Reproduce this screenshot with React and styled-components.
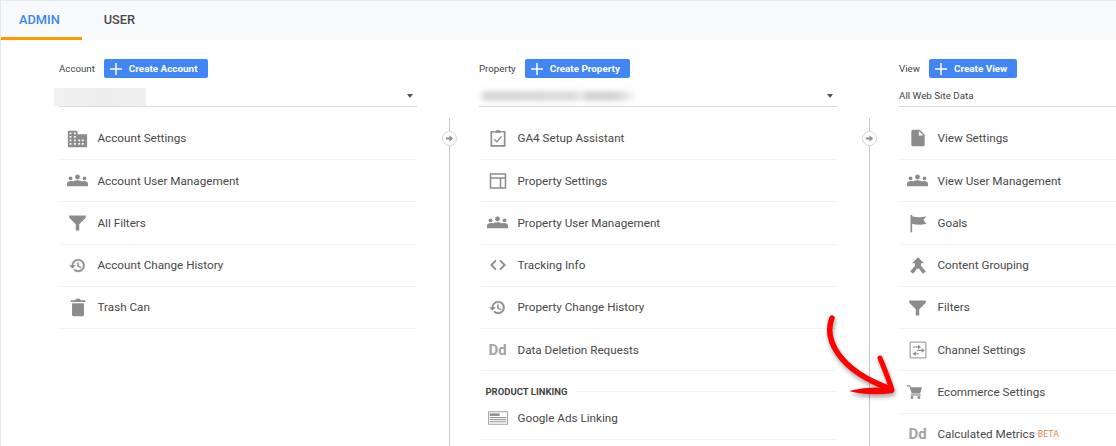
import React from "react";
import styled, { createGlobalStyle } from "styled-components";

const GlobalStyle = createGlobalStyle`
    html, body {
        margin: 0;
        padding: 0;
        background: #fff;
        font-family: Roboto, "Liberation Sans", sans-serif;
    }
`;

const filled = (d) => <path d={d} fill="currentColor" />;

const icons = {
    domain: filled("M12 7V3H1v19h22V7H12zM5 19H3v-2h2v2zm0-4H3v-2h2v2zm0-4H3V9h2v2zm0-4H3V5h2v2zm5 12H8v-2h2v2zm0-4H8v-2h2v2zm0-4H8V9h2v2zm0-4H8V5h2v2zm5 8h-2v-2h2v2zm0 4h-2v-2h2v2zm4-4h-2v-2h2v2zm0 4h-2v-2h2v2z"),
    group: (
        <g fill="currentColor">
            <circle cx="4" cy="9.500" r="2.200" />
            <circle cx="12" cy="8" r="2.800" />
            <circle cx="20" cy="9.500" r="2.200" />
            <path d="M0 18.500v-3c0-1.800 2-3 4.500-3 1 0 1.800.2 2.500.5 1.300-.8 3-1.200 5-1.200s3.700.4 5 1.200c.7-.3 1.500-.5 2.500-.5 2.500 0 4.500 1.200 4.500 3v3z" />
        </g>
    ),
    filter: filled("M2.500 4h19v2.500L14 14v7h-4v-7L2.500 6.500z"),
    history: (
        <path
            d="M13 3a9 9 0 0 0-9 9H1l3.890 3.890.07.14L9 12H6c0-3.870 3.130-7 7-7s7 3.130 7 7-3.130 7-7 7c-1.930 0-3.680-.79-4.940-2.060l-1.420 1.420A8.954 8.954 0 0 0 13 21a9 9 0 0 0 0-18zm-1 5v5l4.280 2.540.72-1.210-3.500-2.080V8H12z"
            fill="currentColor"
            stroke="currentColor"
            strokeWidth="0.800"
        />
    ),
    trash: filled("M5.500 8h13v12.500c0 .8-.7 1.500-1.500 1.500H7c-.8 0-1.500-.7-1.500-1.500zM4 4.500h5L10 3h4l1 1.500h5v2H4z"),
    setup: (
        <g fill="none" stroke="currentColor" strokeWidth="2">
            <path d="M8 4.500H4v17h16v-17h-4" />
            <path d="M9 5.500V3.500h2c0-1.500 2-1.500 2 0h2v2z" fill="currentColor" strokeWidth="1" />
            <path d="M7.500 13.500l3 3 6-6.500" strokeWidth="1.600" />
        </g>
    ),
    layout: (
        <g fill="none" stroke="currentColor" strokeWidth="1.800">
            <path d="M3 3.500h18v17H3zM3 8.500h18M15 8.500v12" />
        </g>
    ),
    code: (
        <g fill="none" stroke="currentColor" strokeWidth="2.200">
            <path d="M9.500 6.500L4 12l5.500 5.500M14.500 6.500L20 12l-5.500 5.500" />
        </g>
    ),
    ads: (
        <g fill="none" stroke="currentColor">
            <path d="M.5 4.500h23v15H.500z" strokeWidth="1" />
            <path d="M2 8h12" strokeWidth="3" />
            <path d="M2 11.500h20M2 14h20M2 16.500h20" strokeWidth="1.200" />
        </g>
    ),
    file: filled("M6 2c-1.100 0-1.990.9-1.990 2L4 20c0 1.100.89 2 1.990 2H18c1.100 0 2-.9 2-2V8l-6-6H6zm7 7V3.500L18.500 9H13z"),
    flag: filled("M3 2.500h2V23H3zM5 4c5.500 1.500 10 1.500 17 0l-3.500 4.500 3.500 4.500c-7 1.500-11.500 1.500-17 0z"),
    merge: filled("M12 1.500L20 9.500h-4v3.500l6.500 7.500-4 3-5-6.500h-3l-5 6.500-4-3L8 13V9.500H4z"),
    channel: (
        <g fill="none" stroke="currentColor">
            <path d="M1.500 1.500h21v21h-21z" strokeWidth="1.300" />
            <path d="M5 8h8M6 17h7M11 12.500h8" strokeWidth="1.600" />
            <path d="M12 5l4 3-4 3zM9 14l-4 3 4 3zM17 9.500l4 3-4 3z" fill="currentColor" stroke="none" />
        </g>
    ),
    cart: (
        <g fill="currentColor">
            <path d="M0 2h5l1 3h18l-3 10H7.500L4 4H0z" />
            <path d="M6 16.500h16v2H6z" />
            <circle cx="8" cy="21.500" r="2.300" />
            <circle cx="19" cy="21.500" r="2.300" />
        </g>
    ),
};

const iconSizes = { group: 21, domain: 21, history: 17, trash: 22, merge: 18, channel: 18, cart: 15, filter: 21 };

const columns = [
    {
        label: "Account",
        create: "Create Account",
        selected: "blank",
        rows: [
            { icon: "domain", text: "Account Settings" },
            { icon: "group", text: "Account User Management" },
            { icon: "filter", text: "All Filters" },
            { icon: "history", text: "Account Change History" },
            { icon: "trash", text: "Trash Can" },
        ],
    },
    {
        label: "Property",
        create: "Create Property",
        selected: "blurred",
        rows: [
            { icon: "setup", text: "GA4 Setup Assistant" },
            { icon: "layout", text: "Property Settings" },
            { icon: "group", text: "Property User Management" },
            { icon: "code", text: "Tracking Info" },
            { icon: "history", text: "Property Change History" },
            { icon: "dd", text: "Data Deletion Requests" },
            { section: "PRODUCT LINKING" },
            { icon: "ads", text: "Google Ads Linking" },
        ],
    },
    {
        label: "View",
        create: "Create View",
        selected: "All Web Site Data",
        noCaret: true,
        rows: [
            { icon: "file", text: "View Settings" },
            { icon: "group", text: "View User Management" },
            { icon: "flag", text: "Goals" },
            { icon: "merge", text: "Content Grouping" },
            { icon: "filter", text: "Filters" },
            { icon: "channel", text: "Channel Settings" },
            { icon: "cart", text: "Ecommerce Settings" },
            { icon: "dd", text: "Calculated Metrics", beta: true },
        ],
    },
];

const MenuIcon = ({ name }) => {
    if (name === "dd") return <DdGlyph>Dd</DdGlyph>;
    return (
        <IconSvg viewBox="0 0 24 24" $size={iconSizes[name] || 20} $cart={name === "cart"}>
            {icons[name]}
        </IconSvg>
    );
};

const renderSelected = (selected) => {
    if (selected === "blank") return <BlankBar />;
    if (selected === "blurred") return <BlurBar />;
    return <PlainValue>{selected}</PlainValue>;
};

const App = () => {
    return (
        <Page>
            <GlobalStyle />
            <TabBar>
                <Tab $active>ADMIN</Tab>
                <Tab>USER</Tab>
            </TabBar>
            <Columns>
                {columns.map((col, i) => (
                    <React.Fragment key={col.label}>
                        {i > 0 && (
                            <Rail>
                                <RailDot>
                                    <svg viewBox="0 0 10 10" width="9" height="9">
                                        <path d="M1 4h4V1.500L9 5 5 8.500V6H1z" fill="#8f8f8f" />
                                    </svg>
                                </RailDot>
                            </Rail>
                        )}
                        <Column>
                            <ColumnHead>
                                <HeadLabel>{col.label}</HeadLabel>
                                <CreateButton>
                                    <svg viewBox="0 0 12 12" width="12" height="12">
                                        <path d="M6 0v12M0 6h12" stroke="#fff" strokeWidth="1.500" />
                                    </svg>
                                    {col.create}
                                </CreateButton>
                            </ColumnHead>
                            <Selector>
                                {renderSelected(col.selected)}
                                {!col.noCaret && <Caret />}
                            </Selector>
                            <Menu>
                                {col.rows.map((row) =>
                                    row.section ? (
                                        <SectionTitle key={row.section}>{row.section}</SectionTitle>
                                    ) : (
                                        <MenuRow key={row.text}>
                                            <IconSlot><MenuIcon name={row.icon} /></IconSlot>
                                            <span>{row.text}</span>
                                            {row.beta && <Beta>BETA</Beta>}
                                        </MenuRow>
                                    )
                                )}
                            </Menu>
                        </Column>
                    </React.Fragment>
                ))}
            </Columns>
            <CurvedArrow viewBox="0 0 90 90" width="90" height="90">
                <path d="M9 6C1 26 14 58 68 77" fill="none" stroke="#f00" strokeWidth="5.500" strokeLinecap="round" />
                <path d="M26 79C40 75 55 75 70 76L70 81C55 83 40 83 26 79z" fill="#f00" />
                <path d="M57 46C61 56 66 68 69 78" fill="none" stroke="#f00" strokeWidth="5" strokeLinecap="round" />
            </CurvedArrow>
        </Page>
    );
};

const Page = styled.div`
    position: relative;
    width: 1116px;
    height: 446px;
    overflow: hidden;
    box-sizing: border-box;
    border-top: 1px solid #e6e8ea;
    border-left: 1px solid #e6e8ea;
    background: #fff;
`;

const TabBar = styled.div`
    display: flex;
    gap: 4px;
    height: 39px;
    background: #f8f9fa;
`;

const Tab = styled.div`
    display: flex;
    align-items: center;
    box-sizing: border-box;
    padding: 0 22px 0 18px;
    font-size: 12.8px;
    font-weight: 500;
    color: ${(props) => (props.$active ? "#3b85ec" : "#4a4a4a")};
    border-bottom: 3px solid ${(props) => (props.$active ? "#ff9800" : "transparent")};
`;

const Columns = styled.div`
    display: flex;
    padding: 19px 0 0 58px;
`;

const Column = styled.div`
    flex: 0 0 358px;
`;

const Rail = styled.div`
    position: relative;
    flex: 0 0 62px;
    margin-top: 59px;
    margin-bottom: -200px;
    &::before {
        content: "";
        position: absolute;
        left: 32px;
        top: 0;
        bottom: 0;
        width: 1px;
        background: #c6c6c6;
    }
`;

const RailDot = styled.div`
    position: absolute;
    left: 25px;
    top: 13px;
    display: flex;
    align-items: center;
    justify-content: center;
    box-sizing: border-box;
    width: 15px;
    height: 15px;
    border: 1px solid #d6d6d6;
    border-radius: 50%;
    background: #fff;
`;

const ColumnHead = styled.div`
    display: flex;
    align-items: center;
    gap: 9px;
    height: 19px;
`;

const HeadLabel = styled.div`
    font-size: 9.7px;
    color: #444;
`;

const CreateButton = styled.div`
    display: flex;
    align-items: center;
    gap: 7px;
    height: 19px;
    padding: 0 10px 0 6px;
    box-sizing: border-box;
    border-radius: 2px;
    background: #4285f4;
    color: #fff;
    font-size: 9.9px;
    font-weight: 700;
`;

const Selector = styled.div`
    display: flex;
    align-items: center;
    justify-content: space-between;
    height: 16px;
    margin-top: 10px;
    padding: 0 4px 2px 0;
    border-bottom: 1px solid #dadce0;
`;

const PlainValue = styled.div`
    margin-bottom: 2px;
    font-size: 9.8px;
    color: #444;
`;

const BlankBar = styled.div`
    width: 92px;
    height: 18px;
    margin: 0 0 -2px -5px;
    background: linear-gradient(90deg, #f1f1f1, #ededed 50%, #f0f0f0);
`;

const BlurBar = styled.div`
    width: 152px;
    height: 8px;
    margin-left: 3px;
    border-radius: 3px;
    background: linear-gradient(90deg, #cacaca, #d2d2d2 62%, #f4f4f4 65%, #c6c6c6 68%, #cacaca 88%, #f0f0f0);
    filter: blur(3px);
`;

const Caret = styled.div`
    width: 0;
    height: 0;
    border-left: 3.5px solid transparent;
    border-right: 3.5px solid transparent;
    border-top: 4px solid #555;
`;

const Menu = styled.div`
    margin: 10.8px 0 0 1.5px;
`;

const MenuRow = styled.div`
    display: flex;
    align-items: center;
    box-sizing: border-box;
    height: 42.25px;
    padding-left: 5px;
    border-bottom: 1px solid #f0f1f2;
    font-size: 11.7px;
    color: #484848;
`;

const IconSlot = styled.div`
    display: flex;
    align-items: center;
    justify-content: center;
    flex: 0 0 24px;
    margin-right: 8px;
    color: #8c8c8c;
`;

const IconSvg = styled.svg`
    width: ${(props) => props.$size}px;
    height: ${(props) => props.$size}px;
    margin-right: ${(props) => (props.$cart ? "7px" : "0")};
`;

const DdGlyph = styled.span`
    font-size: 15px;
    font-weight: 700;
    color: #a4a4a4;
`;

const Beta = styled.span`
    margin-left: 3px;
    font-size: 8.8px;
    color: #e2824f;
`;

const SectionTitle = styled.div`
    display: flex;
    align-items: center;
    gap: 9px;
    height: 26px;
    padding: 14px 0 0 5px;
    box-sizing: border-box;
    font-size: 9.5px;
    font-weight: 700;
    color: #444;
    white-space: nowrap;
    &::after {
        content: "";
        flex: 1;
        height: 1px;
        background: #f0f1f2;
    }
`;

const CurvedArrow = styled.svg`
    position: absolute;
    left: 822px;
    top: 311px;
    filter: drop-shadow(1px 3px 2px rgba(0, 0, 0, 0.35));
`;

export default App;
